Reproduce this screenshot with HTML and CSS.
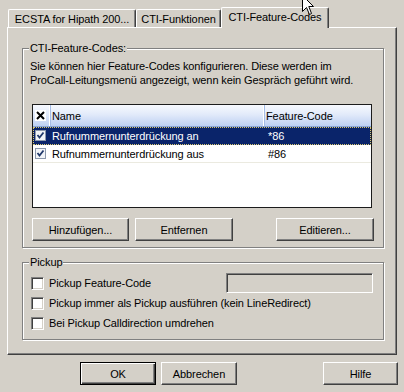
FILE: index.html
```html
<!DOCTYPE html>
<html>
<head>
<meta charset="utf-8">
<link rel="stylesheet" href="styles.css">
</head>
<body>
<div class="dialog">
  <div class="tabs">
    <div class="tab tab-1">ECSTA for Hipath 200...</div>
    <div class="tab tab-2">CTI-Funktionen</div>
    <div class="tab tab-active">CTI-Feature-Codes</div>
  </div>
  <div class="panel">
    <div class="group group-codes">
      <span class="group-label">CTI-Feature-Codes:</span>
      <p class="desc">Sie können hier Feature-Codes konfigurieren. Diese werden im<br>ProCall-Leitungsmenü angezeigt, wenn kein Gespräch geführt wird.</p>
      <div class="list">
        <div class="list-head">
          <div class="hcell hcell-check">
            <svg class="xicon" width="11" height="11" viewBox="0 0 11 11"><rect x="0" y="0" width="11" height="11" fill="#fff"/><path d="M2 2 L9 9 M9 2 L2 9" stroke="#000" stroke-width="2"/></svg>
          </div>
          <div class="hcell hcell-name">Name</div>
          <div class="hcell hcell-code">Feature-Code</div>
        </div>
        <div class="row row-selected">
          <div class="cell cell-check"><svg class="cb" width="11" height="11" viewBox="0 0 11 11"><rect x="0.5" y="0.5" width="10" height="10" fill="#f2f4f8" stroke="#8c98ac"/><path d="M2.5 5 L4.5 7.5 L8.5 2.5" stroke="#21396b" stroke-width="1.8" fill="none"/></svg></div>
          <div class="cell cell-name">Rufnummernunterdrückung an</div>
          <div class="cell cell-code">*86</div>
        </div>
        <div class="row">
          <div class="cell cell-check"><svg class="cb" width="11" height="11" viewBox="0 0 11 11"><rect x="0.5" y="0.5" width="10" height="10" fill="#f2f4f8" stroke="#8c98ac"/><path d="M2.5 5 L4.5 7.5 L8.5 2.5" stroke="#21396b" stroke-width="1.8" fill="none"/></svg></div>
          <div class="cell cell-name">Rufnummernunterdrückung aus</div>
          <div class="cell cell-code">#86</div>
        </div>
      </div>
      <div class="btn-row">
        <button class="btn btn-add">Hinzufügen...</button>
        <button class="btn btn-remove">Entfernen</button>
        <button class="btn btn-edit">Editieren...</button>
      </div>
    </div>
    <div class="group group-pickup">
      <span class="group-label">Pickup</span>
      <div class="check-row">
        <span class="checkbox"></span><span class="check-text">Pickup Feature-Code</span>
        <span class="textbox"></span>
      </div>
      <div class="check-row">
        <span class="checkbox"></span><span class="check-text">Pickup immer als Pickup ausführen (kein LineRedirect)</span>
      </div>
      <div class="check-row">
        <span class="checkbox"></span><span class="check-text">Bei Pickup Calldirection umdrehen</span>
      </div>
    </div>
  </div>
  <div class="footer">
    <button class="btn btn-default btn-ok">OK</button>
    <button class="btn btn-cancel">Abbrechen</button>
    <button class="btn btn-help">Hilfe</button>
  </div>
  <svg class="cursor" width="13" height="20" viewBox="0 0 13 20"><path d="M0.5 0.5 L0.5 16.5 L4.5 12.5 L7.5 19.5 L9.5 18.5 L6.8 11.5 L11.5 11.5 Z" fill="#fff" stroke="#000" stroke-width="1"/></svg>
</div>
</body>
</html>
```

FILE: styles.css
```css
* { box-sizing: border-box; }
html, body {
  margin: 0;
  padding: 0;
  background: #d4d0c8;
  width: 404px;
  height: 392px;
  overflow: hidden;
  font-family: "Liberation Sans", Arial, sans-serif;
  font-size: 11px;
  letter-spacing: -0.1px;
  color: #000;
}
.dialog {
  position: relative;
  width: 404px;
  height: 392px;
  padding-top: 7px;
}
.tabs {
  display: flex;
  align-items: flex-end;
  height: 20px;
  margin-left: 8px;
}
.tab {
  height: 18px;
  border: 1px solid;
  border-color: #fff #404040 transparent #fff;
  border-bottom: none;
  border-radius: 2px 2px 0 0;
  box-shadow: inset -1px 0 0 #808080;
  background: #d4d0c8;
  padding: 3px 0 0 0;
  white-space: nowrap;
  text-align: center;
}
.tab-1 { width: 128px; }
.tab-2 { width: 85px; }
.tab-active {
  position: relative;
  z-index: 2;
  width: 108px;
  height: 21px;
  margin-bottom: -1px;
  padding-top: 3px;
}
.panel {
  margin-left: 7px;
  width: 390px;
  height: 328px;
  border: 1px solid;
  border-color: #fff #404040 #404040 #fff;
  box-shadow: inset -1px -1px 0 #808080;
  padding: 20px 0 0 14px;
}
.group {
  position: relative;
  width: 362px;
  border: 1px solid #808080;
  box-shadow: inset 1px 1px 0 #fff, 1px 1px 0 #fff;
}
.group-codes {
  height: 200px;
  padding: 10px 0 0 7px;
}
.group-label {
  position: absolute;
  top: -8px;
  left: 6px;
  padding: 0 1px;
  background: #d4d0c8;
  line-height: 14px;
}
.desc {
  margin: 0;
  line-height: 14px;
}
.list {
  margin: 17px 0 0 2px;
  width: 340px;
  height: 104px;
  border: 1px solid #1c1c1c;
  background: #fff;
}
.list-head {
  display: flex;
  height: 22px;
  background: linear-gradient(to bottom, #f7f9fe 0%, #e2eafa 45%, #bdd0f2 100%);
  border-bottom: 1px solid #8aa6d8;
}
.hcell {
  display: flex;
  align-items: center;
  height: 21px;
  padding-left: 3px;
}
.hcell-check { width: 17px; padding-left: 2px; border-right: 1px solid #fff; box-shadow: 1px 0 0 #a6bde6; }
.hcell-name { width: 214px; border-right: 1px solid #fff; box-shadow: 1px 0 0 #a6bde6; padding-left: 2px; }
.hcell-code { flex: 1; padding-left: 2px; }
.row {
  display: flex;
  align-items: center;
  height: 18px;
  border-bottom: 1px solid #ebeae0;
}
.row-selected {
  background: #0a246a;
  color: #fff;
  outline: 1px dotted #d9c870;
  outline-offset: -1px;
  border-bottom-color: #0a246a;
}
.cell-check { width: 19px; padding-left: 2px; display: flex; align-items: center; }
.cell-name { width: 214px; padding-left: 0; }
.cell-code { flex: 1; padding-left: 2px; }
.btn-row {
  display: flex;
  margin: 10px 0 0 2px;
}
.btn {
  height: 23px;
  border: 1px solid;
  border-color: #fff #404040 #404040 #fff;
  box-shadow: inset -1px -1px 0 #808080;
  background: #d4d0c8;
  font-family: "Liberation Sans", Arial, sans-serif;
  font-size: 11px;
  letter-spacing: -0.1px;
  color: #000;
  padding: 0;
}
.btn-add { width: 97px; }
.btn-remove { width: 98px; margin-left: 6px; }
.btn-edit { width: 98px; margin-left: 43px; }
.group-pickup {
  height: 78px;
  margin-top: 14px;
  padding: 10px 0 0 8px;
}
.check-row {
  display: flex;
  align-items: center;
  height: 20px;
}
.checkbox {
  width: 13px;
  height: 13px;
  background: #fff;
  border: 1px solid;
  border-color: #808080 #fff #fff #808080;
  box-shadow: inset 1px 1px 0 #404040, inset -1px -1px 0 #d4d0c8;
  flex: none;
}
.check-text { margin-left: 5px; white-space: nowrap; }
.textbox {
  margin-left: auto;
  margin-right: 10px;
  width: 147px;
  height: 20px;
  background: #d4d0c8;
  border: 1px solid;
  border-color: #808080 #fff #fff #808080;
  box-shadow: inset 1px 1px 0 #404040, inset -1px -1px 0 #d4d0c8;
}
.footer {
  display: flex;
  margin-top: 7px;
  padding-left: 80px;
}
.btn-ok { width: 76px; }
.btn-default {
  border: 1px solid #000;
  box-shadow: inset 1px 1px 0 #fff, inset -1px -1px 0 #404040, inset -2px -2px 0 #808080;
}
.btn-cancel { width: 76px; margin-left: 5px; }
.btn-help { width: 75px; margin-left: 86px; }
.cursor {
  position: absolute;
  z-index: 5;
  left: 302px;
  top: -5px;
}
```
